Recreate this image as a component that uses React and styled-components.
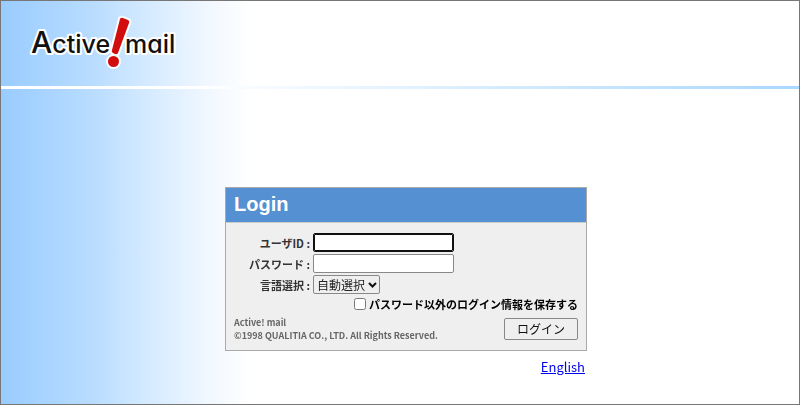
import React, { useState } from 'react'
import styled, { createGlobalStyle } from 'styled-components';

const App = () => {
    const [login, setLogin] = useState({
        user: '',
        password: '',
        language: 'auto',
        save: false
    });
    const change = (name, value) => {
        setLogin((last) => ({ ...last, [name]: value }));
    }
    const onSubmit = (e) => {
        e.preventDefault();
    }
    return (
        <Page>
            <GlobalStyle />
            <Header>
                <Logo />
            </Header>
            <Line />
            <Main>
                <Panel onSubmit={onSubmit}>
                    <Title>Login</Title>
                    <Content>
                        <Row>
                            <Label htmlFor="user">ユーザID :</Label>
                            <Input id="user" type="text" autoFocus value={login.user} onChange={(e) => change('user', e.target.value)} />
                        </Row>
                        <Row>
                            <Label htmlFor="password">パスワード :</Label>
                            <Input id="password" type="password" value={login.password} onChange={(e) => change('password', e.target.value)} />
                        </Row>
                        <Row>
                            <Label htmlFor="language">言語選択 :</Label>
                            <SelectBox>
                                <Select id="language" value={login.language} onChange={(e) => change('language', e.target.value)}>
                                    <option value="auto">自動選択</option>
                                </Select>
                                <Arrow width="9" height="6" viewBox="0 0 9 6" aria-hidden="true">
                                    <path d="M1 1 L4.5 4.5 L8 1" />
                                </Arrow>
                            </SelectBox>
                        </Row>
                        <Save>
                            <Check id="save" type="checkbox" checked={login.save} onChange={(e) => change('save', e.target.checked)} />
                            <label htmlFor="save">パスワード以外のログイン情報を保存する</label>
                        </Save>
                        <Bottom>
                            <Copyright>
                                Active! mail<br />
                                ©1998 QUALITIA CO., LTD. All Rights Reserved.
                            </Copyright>
                            <Button type="submit">ログイン</Button>
                        </Bottom>
                    </Content>
                </Panel>
                <English href="#english">English</English>
            </Main>
        </Page>
    )
}

const Logo = () => (
    <LogoSvg width="152" height="60" viewBox="0 0 152 60" role="img" aria-label="Active! mail">
        <text x="3" y="39"><tspan className="capital">A</tspan>ctive</text>
        <text x="97" y="39">mail</text>
        <path d="M92 5 Q93 3 95 4 L100 6 Q102 7 101 9 L90 39 Q89 41 87 40 L85 39 Q83 38 84 36 Z" />
        <circle cx="85.5" cy="47.5" r="5.5" />
    </LogoSvg>
)

export default App

const GlobalStyle = createGlobalStyle`
    *{
        box-sizing:border-box;
    }
    body{
        margin:0;
        background:#fff;
        font-family:"Noto Sans CJK JP", sans-serif;
        font-size:11px;
    }
`;
const Page = styled.div`
    min-height:100vh;
    border:1px solid #777;
    background:linear-gradient(to right, #99ccff 0, #b8dcff 90px, #d6ebff 150px, #f2f8ff 210px, #fff 250px);
`;
const Header = styled.header`
    height:85px;
    padding:13px 27px;
`;
const LogoSvg = styled.svg`
    display:block;

    text, path, circle{
        stroke:#fff;
        stroke-width:4px;
        stroke-linejoin:round;
        paint-order:stroke;
    }
    text{
        font-family:Inter, sans-serif;
        font-size:25px;
        font-weight:500;
        font-feature-settings:"cv11";
        fill:#111;
    }
    .capital{
        font-size:30px;
    }
    path, circle{
        fill:#d10d0d;
    }
`;
const Line = styled.div`
    height:3px;
    background:linear-gradient(to right, #fff 25%, #aad8ff);
`;
const Main = styled.main`
    display:grid;
    grid-template-columns:362px;
    justify-content:center;
    padding:98px 0 0 12px;
`;
const Panel = styled.form`
    border:1px solid #aaa;
    background:#efefef;
`;
const Title = styled.h1`
    margin:0;
    padding:0 8px 2px;
    border-bottom:1px solid #ccc;
    background:#5590d2;
    color:#fff;
    font-family:"Liberation Sans", Arial, sans-serif;
    font-size:20px;
    line-height:32px;
`;
const Content = styled.div`
    padding:9px 8px 8px;
`;
const Row = styled.div`
    display:grid;
    grid-template-columns:76px 1fr;
    column-gap:3px;
    align-items:center;
    height:21px;
`;
const Label = styled.label`
    color:#333;
    font-weight:bold;
    text-align:right;
    white-space:nowrap;
`;
const Input = styled.input`
    width:141px;
    height:19px;
    padding:1px 2px;
    border:1px solid #888;
    border-radius:2px;
    background:#fff;
    font-family:inherit;
    font-size:12px;

    &:focus{
        outline:1px solid #111;
        outline-offset:-2px;
        border-color:#111;
        caret-color:transparent;
    }
`;
const SelectBox = styled.div`
    display:grid;
    grid-template-columns:67px;
    align-items:center;

    & > *{
        grid-area:1 / 1;
    }
`;
const Select = styled.select`
    appearance:none;
    height:19px;
    padding:0 0 0 3px;
    border:1px solid #888;
    border-radius:2px;
    background:#efefef;
    color:#222;
    font-family:inherit;
    font-size:12px;
    line-height:17px;
`;
const Arrow = styled.svg`
    justify-self:end;
    margin-right:3px;
    fill:none;
    stroke:#111;
    stroke-width:2px;
    pointer-events:none;
`;
const Save = styled.div`
    display:flex;
    justify-content:flex-end;
    align-items:center;
    gap:3px;
    height:18px;
    color:#000;
    font-weight:bold;
`;
const Check = styled.input`
    width:12px;
    height:12px;
    margin:0;
`;
const Bottom = styled.div`
    display:flex;
    justify-content:space-between;
    align-items:center;
    padding-top:3px;
`;
const Copyright = styled.p`
    margin:0;
    color:#666;
    font-size:9px;
    font-weight:bold;
    line-height:13px;
`;
const Button = styled.button`
    width:74px;
    height:22px;
    padding:0;
    border:1px solid #888;
    border-radius:2px;
    background:#efefef;
    color:#111;
    font-family:inherit;
    font-size:12px;
    line-height:20px;
`;
const English = styled.a`
    justify-self:end;
    margin:6px 2px 0 0;
    color:#00e;
    font-size:13px;
    line-height:20px;
`;
